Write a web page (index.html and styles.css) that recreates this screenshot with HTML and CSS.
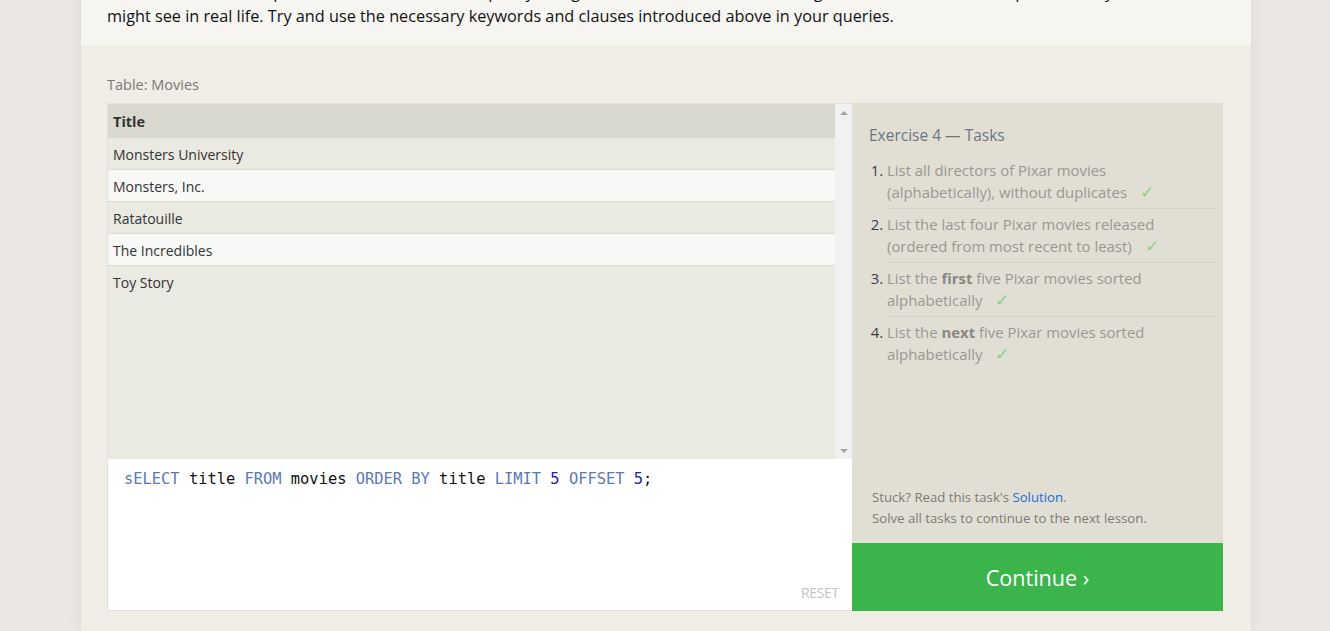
FILE: index.html
```html
<!DOCTYPE html>
<html>
<head>
<meta charset="utf-8">
<link rel="stylesheet" href="styles.css">
</head>
<body>
<div class="page">
  <div class="intro">
    <p class="intro-text">There are a few concepts in this lesson, but all are pretty straight-forward. To reinforce them, go ahead and write some queries that you
might see in real life. Try and use the necessary keywords and clauses introduced above in your queries.</p>
  </div>
  <div class="exercise">
    <div class="table-label">Table: Movies</div>
    <div class="workspace">
      <div class="left">
        <div class="results">
          <div class="table-wrap">
            <div class="row head">Title</div>
            <div class="row odd">Monsters University</div>
            <div class="row even">Monsters, Inc.</div>
            <div class="row odd">Ratatouille</div>
            <div class="row even">The Incredibles</div>
            <div class="row odd">Toy Story</div>
          </div>
          <div class="scrollbar">
            <span class="arrow up"></span>
            <span class="arrow down"></span>
          </div>
        </div>
        <div class="editor">
          <div class="code"><span class="kw">sELECT</span> title <span class="kw">FROM</span> movies <span class="kw">ORDER BY</span> title <span class="kw">LIMIT</span> <span class="num">5</span> <span class="kw">OFFSET</span> <span class="num">5</span>;</div>
          <div class="reset">RESET</div>
        </div>
      </div>
      <div class="right">
        <div class="tasks">
          <h3 class="tasks-title">Exercise 4 — Tasks</h3>
          <ol class="task-list">
            <li>List all directors of Pixar movies (alphabetically), without duplicates <span class="check">✓</span></li>
            <li>List the last four Pixar movies released (ordered from most recent to least) <span class="check">✓</span></li>
            <li>List the <b>first</b> five Pixar movies sorted alphabetically <span class="check">✓</span></li>
            <li>List the <b>next</b> five Pixar movies sorted alphabetically <span class="check">✓</span></li>
          </ol>
          <div class="help">
            <div>Stuck? Read this task's <a class="link">Solution</a>.</div>
            <div>Solve all tasks to continue to the next lesson.</div>
          </div>
        </div>
        <div class="continue">Continue ›</div>
      </div>
    </div>
  </div>
</div>
</body>
</html>
```

FILE: styles.css
```css
html, body {
  margin: 0;
  padding: 0;
}
body {
  background: #ebe7e3;
  font-family: "Open Sans", "Noto Sans", sans-serif;
  overflow: hidden;
  height: 631px;
}
.page {
  width: 1170px;
  margin: -20px 0 0 81px;
  box-shadow: 0 0 14px rgba(0, 0, 0, 0.07);
}
.intro {
  background: #f6f5f2;
  padding: 0 28px 17px 26px;
}
.intro-text {
  margin: 0;
  font-size: 16.25px;
  line-height: 24px;
  color: #111;
  white-space: pre-line;
}
.exercise {
  background: #efede5;
  padding: 30px 28px 20px 26px;
}
.table-label {
  font-size: 14.5px;
  color: #7c7a75;
  line-height: 20px;
  margin-bottom: 8px;
}
.workspace {
  display: flex;
}
.left {
  width: 745px;
  display: flex;
  flex-direction: column;
}
.results {
  height: 356px;
  display: flex;
  background: #eae9e2;
  border-top: 1px solid #e3e2da;
  box-sizing: border-box;
}
.table-wrap {
  flex: 1;
  border-left: 1px solid #e3e2da;
}
.row {
  height: 32px;
  line-height: 33px;
  padding-left: 5px;
  font-size: 14px;
  color: #333;
  border-bottom: 1px solid #dcdbd4;
  box-sizing: border-box;
  overflow: hidden;
}
.row.head {
  height: 34px;
  line-height: 36px;
  background: #dad9cf;
  font-weight: 700;
  font-size: 14.5px;
  border-bottom: none;
}
.row.odd { background: #eae9e2; }
.row.even { background: #f8f8f7; }
.row:last-child { border-bottom: none; }
.scrollbar {
  width: 17px;
  background: #f1f1f1;
  display: flex;
  flex-direction: column;
  justify-content: space-between;
  align-items: center;
  padding: 7px 0 6px;
  box-sizing: border-box;
}
.arrow {
  width: 0;
  height: 0;
  border-left: 4px solid transparent;
  border-right: 4px solid transparent;
}
.arrow.up { border-bottom: 4px solid #a3a3a3; }
.arrow.down { border-top: 4px solid #a3a3a3; }
.editor {
  height: 152px;
  background: #fff;
  border-bottom: 1px solid #e0dfd8;
  border-left: 1px solid #e3e2da;
  box-sizing: border-box;
  display: flex;
  flex-direction: column;
  justify-content: space-between;
  padding: 10px 12px 8px 16px;
}
.code {
  font-family: "DejaVu Sans Mono", "Liberation Mono", monospace;
  font-size: 15.4px;
  line-height: 20px;
  color: #111;
}
.kw { color: #5b79b6; }
.num { color: #2020a0; }
.reset {
  align-self: flex-end;
  font-size: 14px;
  color: #c4c4c4;
  letter-spacing: -0.3px;
  margin-right: 1px;
}
.right {
  width: 371px;
  display: flex;
  flex-direction: column;
}
.tasks {
  height: 440px;
  background: #e1dfd4;
  box-sizing: border-box;
  padding: 21px 7px 0 17px;
  display: flex;
  flex-direction: column;
}
.tasks-title {
  margin: 0;
  font-weight: 400;
  font-size: 15.5px;
  line-height: 22px;
  color: #6c7482;
}
.task-list {
  margin: 13px 0 0 0;
  padding: 0 0 0 18px;
  font-size: 14.9px;
  line-height: 22px;
  color: #9a9892;
}
.task-list li {
  padding: 0 28px 5px 0;
  margin-bottom: 4px;
  border-bottom: 1px solid #d5d3c8;
}
.task-list li:last-child {
  border-bottom: none;
}
.task-list li::marker {
  color: #3a3e4a;
}
.task-list b {
  color: #8a8882;
}
.check {
  color: #8ccf8e;
  margin-left: 9px;
  font-size: 17px;
  font-weight: 300;
}
.help {
  margin-top: auto;
  padding-bottom: 14px;
  font-size: 13.2px;
  line-height: 21px;
  color: #7d7b76;
  padding-left: 3px;
}
.link {
  color: #2768d0;
}
.continue {
  height: 68px;
  background: #3bb54b;
  color: #fff;
  font-size: 21.6px;
  display: flex;
  align-items: center;
  justify-content: center;
}
```
